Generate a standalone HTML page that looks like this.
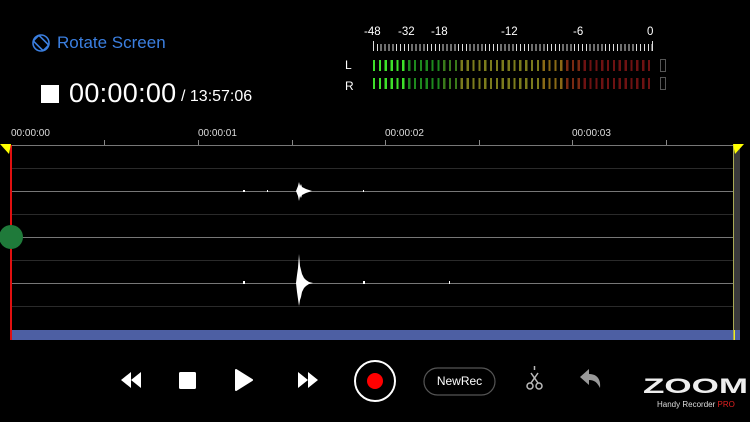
<!DOCTYPE html>
<html><head><style>
*{margin:0;padding:0;box-sizing:border-box}
body{width:750px;height:422px;background:#000;position:relative;overflow:hidden;font-family:"Liberation Sans",sans-serif;color:#fff}
.a{position:absolute}
.meter{position:absolute;left:373px;width:281px;height:11px;
background:repeating-linear-gradient(90deg,transparent 0 2.2px,#000 2.2px 5.85px),
linear-gradient(90deg,#3ee02a 0 12.5%,#1e8a1e 12.5% 24%,#3a7a1a 24% 30%,#7c7c1c 30% 60%,#8a6a16 60% 68%,#7a2a12 68% 74%,#6e1212 74% 100%)}
.hl{position:absolute;left:10px;width:723px;height:1px}
.tl{position:absolute;font-size:10px;color:#ddd;top:128px}
</style></head><body>
<svg class="a" style="left:31px;top:33px" width="20" height="20" viewBox="0 0 20 20"><circle cx="10" cy="10" r="8" fill="none" stroke="#3b7fe0" stroke-width="1.6"/><rect x="6" y="3" width="8" height="14" rx="1.5" transform="rotate(-45 10 10)" fill="none" stroke="#3b7fe0" stroke-width="1.6"/></svg>
<div class="a" style="left:57px;top:33px;font-size:17px;color:#3b7fe0">Rotate Screen</div>
<div class="a" style="left:41px;top:85px;width:18px;height:18px;background:#fff"></div>
<div class="a" style="left:69px;top:78px;font-size:27px;letter-spacing:0.3px">00:00:00</div>
<div class="a" style="left:181px;top:88px;font-size:16px">/ 13:57:06</div>

<div class="a" style="left:364px;top:26px;font-size:11.5px">-48</div>
<div class="a" style="left:398px;top:26px;font-size:11.5px">-32</div>
<div class="a" style="left:431px;top:26px;font-size:11.5px">-18</div>
<div class="a" style="left:501px;top:26px;font-size:11.5px">-12</div>
<div class="a" style="left:573px;top:26px;font-size:11.5px">-6</div>
<div class="a" style="left:647px;top:26px;font-size:11.5px">0</div>
<div class="a" style="left:373px;top:44px;width:281px;height:7px;background:repeating-linear-gradient(90deg,#ddd 0 1px,transparent 1px 3.87px)"></div>
<div class="a" style="left:373px;top:41px;width:1px;height:10px;background:#ddd"></div>
<div class="a" style="left:652px;top:41px;width:1px;height:10px;background:#ddd"></div>
<div class="a" style="left:345px;top:58px;font-size:12px">L</div>
<div class="a" style="left:345px;top:79px;font-size:12px">R</div>
<div class="meter" style="top:60px"></div>
<div class="meter" style="top:78px"></div>
<div class="a" style="left:660px;top:59px;width:6px;height:13px;border:1px solid #555"></div>
<div class="a" style="left:660px;top:77px;width:6px;height:13px;border:1px solid #555"></div>

<div class="tl" style="left:11px">00:00:00</div>
<div class="tl" style="left:198px">00:00:01</div>
<div class="tl" style="left:385px">00:00:02</div>
<div class="tl" style="left:572px">00:00:03</div>
<div class="hl" style="top:145px;background:#777"></div>
<svg class="a" style="left:0;top:140px" width="750" height="6"><g stroke="#888"><line x1="104.5" y1="0" x2="104.5" y2="5"/><line x1="198.5" y1="0" x2="198.5" y2="5"/><line x1="292.5" y1="0" x2="292.5" y2="5"/><line x1="385.5" y1="0" x2="385.5" y2="5"/><line x1="479.5" y1="0" x2="479.5" y2="5"/><line x1="572.5" y1="0" x2="572.5" y2="5"/><line x1="666.5" y1="0" x2="666.5" y2="5"/></g></svg>
<div class="hl" style="top:168px;background:#2a2a2a"></div>
<div class="hl" style="top:191px;background:#777"></div>
<div class="hl" style="top:214px;background:#2a2a2a"></div>
<div class="hl" style="top:237px;background:#777"></div>
<div class="hl" style="top:260px;background:#2a2a2a"></div>
<div class="hl" style="top:283px;background:#777"></div>
<div class="hl" style="top:306px;background:#2a2a2a"></div>
<svg class="a" style="left:0;top:0" width="750" height="422"><g fill="#fff">
<polygon points="296,191 298,186 299,182 300,186 301,184 302,187 304,188 306,189 309,190 312,191 309,192 306,193 304,194 302,195 301,198 300,196 299,201 298,196"/>
<polygon points="296,283 297,275 298,268 299,254 300,266 301,270 302,274 304,278 306,280 309,282 313,283 309,284 306,286 304,288 302,292 301,297 300,300 299,306 298,299 297,292"/>
<rect x="243" y="281" width="2" height="3"/><rect x="363" y="281" width="2" height="3"/><rect x="243" y="190" width="2" height="2"/><rect x="267" y="190" width="1" height="2"/><rect x="363" y="190" width="1" height="2"/><rect x="449" y="281" width="1" height="3"/>
</g></svg>
<div class="a" style="left:733px;top:145px;width:7px;height:195px;background:#3a3a3a"></div>
<div class="a" style="left:10px;top:330px;width:730px;height:10px;background:#4d5fa3"></div>
<div class="a" style="left:733px;top:330px;width:2px;height:10px;background:#ee2"></div>
<div class="a" style="left:733px;top:145px;width:1px;height:195px;background:#aa5"></div>
<div class="a" style="left:10px;top:145px;width:2px;height:195px;background:#e01010"></div>
<div class="a" style="left:-1px;top:225px;width:24px;height:24px;border-radius:50%;background:#1f7a3a"></div>
<svg class="a" style="left:0;top:142px" width="750" height="14"><polygon points="0,2 11,2 9,12" fill="#ff0"/><polygon points="733,2 744,2 735,12" fill="#ff0"/></svg>

<svg class="a" style="left:0;top:360px" width="750" height="45">
<polygon points="121,20 131,12 131,28" fill="#fff"/><polygon points="131,20 141,12 141,28" fill="#fff"/>
<rect x="179" y="12" width="17" height="17" rx="1.5" fill="#fff"/>
<polygon points="236,10 252,20 236,30" fill="#fff" stroke="#fff" stroke-linejoin="round" stroke-width="2"/>
<polygon points="298,12 308,20 298,28" fill="#fff"/><polygon points="308,12 318,20 308,28" fill="#fff"/>
<circle cx="375" cy="21" r="20" fill="none" stroke="#fff" stroke-width="2"/><circle cx="375" cy="21" r="8" fill="#f00"/>
<rect x="424" y="8" width="71" height="27" rx="13.5" fill="none" stroke="#555" stroke-width="1.2"/>
<text x="459.5" y="25" fill="#fff" font-size="12" text-anchor="middle" font-family="Liberation Sans">NewRec</text>
<g stroke="#bbb" stroke-width="1.5" fill="none"><circle cx="530" cy="26" r="3"/><circle cx="539" cy="26" r="3"/><line x1="531" y1="23" x2="538" y2="13"/><line x1="538" y1="23" x2="531" y2="13"/><line x1="534.5" y1="6" x2="534.5" y2="10"/></g>
<path d="M580,17 L589,9 L589,14 C596,14 601,18 600,28 C597,22 594,20 589,20 L589,25 Z" fill="#999"/>
<text x="643" y="33" fill="#eee" font-size="21" font-weight="bold" font-family="Liberation Sans" textLength="105" lengthAdjust="spacingAndGlyphs">ZOOM</text>
</svg>
<div class="a" style="left:657px;top:400px;font-size:8px;color:#ddd">Handy Recorder <span style="color:#e02020">PRO</span></div>
</body></html>
